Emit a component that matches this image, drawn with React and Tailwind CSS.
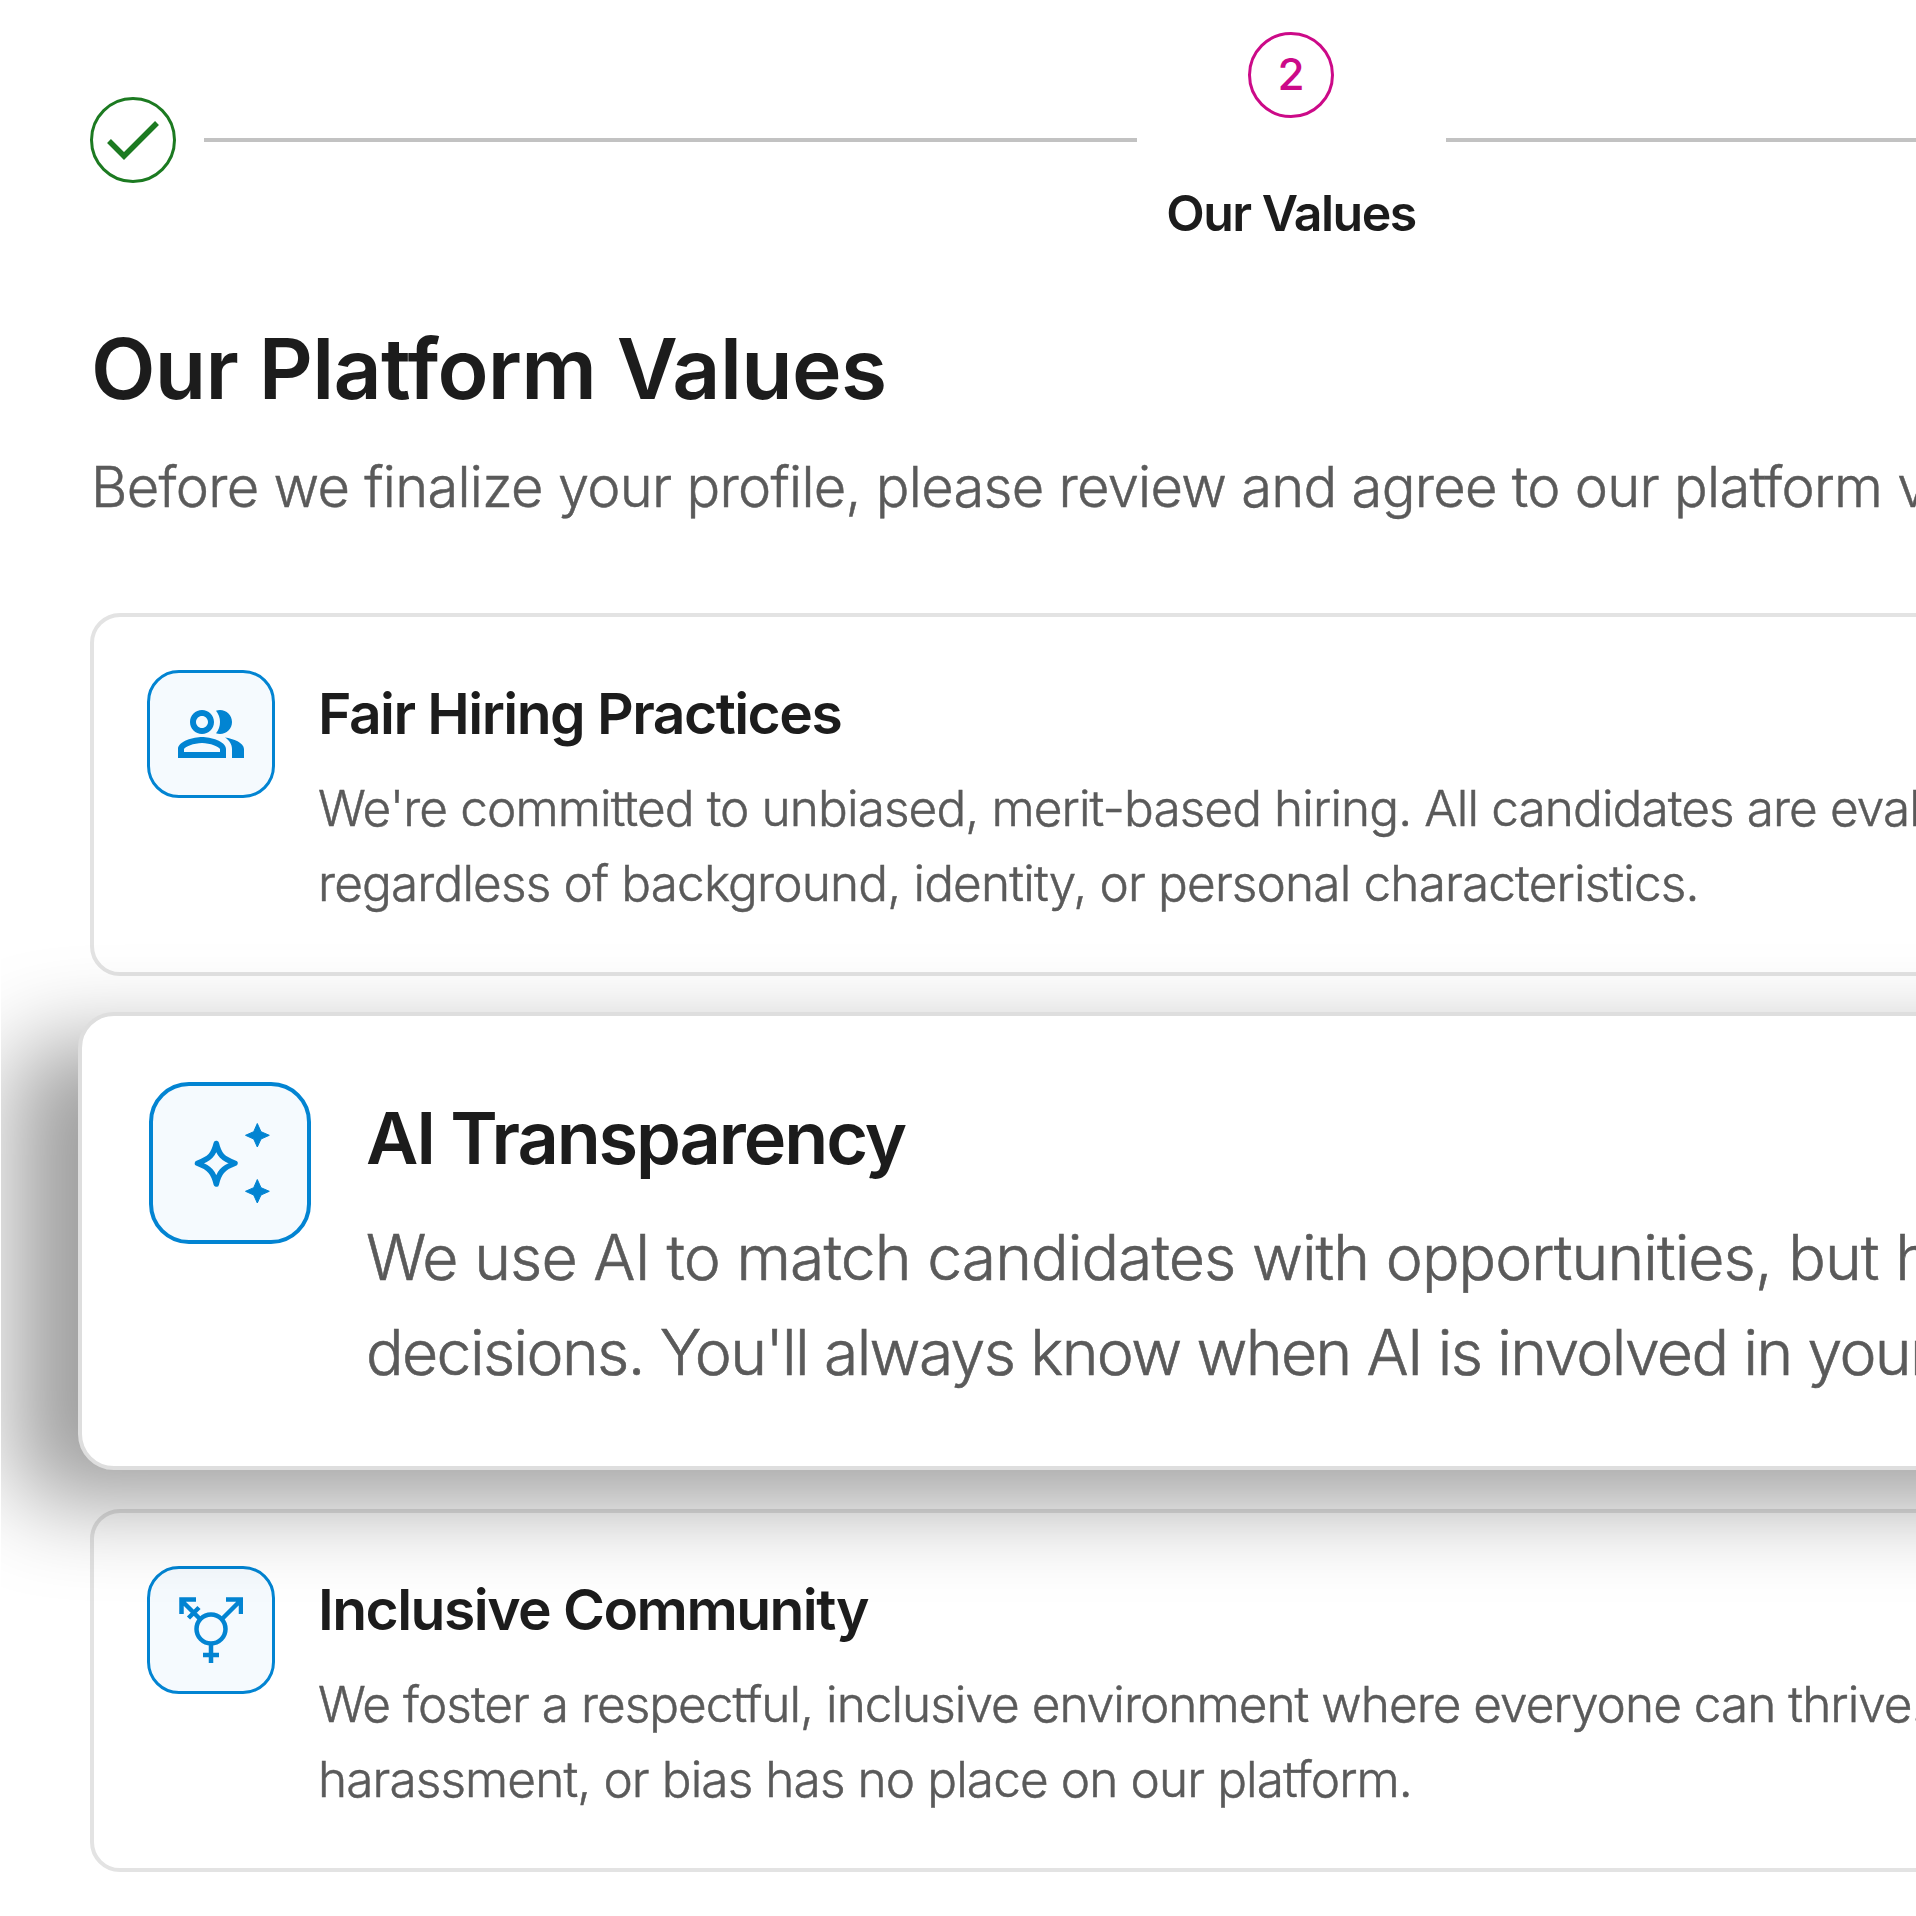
import { MdOutlinePeopleAlt } from 'react-icons/md'

function SparkleIcon() {
    return (
        <svg viewBox="0 0 84 80" className="w-[84px] h-20" fill="currentColor">
            <path d="M28.3 20.5C31 32 34.5 35.5 47 40.3C34.5 45 31 49.5 28.3 61C25.5 49.5 22 45 9.5 40.3C22 35.5 25.5 32 28.3 20.5Z" fill="none" stroke="currentColor" strokeWidth="5.5" strokeLinejoin="round" />
            <path d="M69.3 0.5L73 8.7L81.3 12.3L73 16L69.3 24L65.7 16L57.5 12.3L65.7 8.7Z" stroke="currentColor" strokeLinejoin="round" />
            <path d="M69.3 56.5L73 64.7L81.3 68.3L73 72L69.3 80L65.7 72L57.5 68.3L65.7 64.7Z" stroke="currentColor" strokeLinejoin="round" />
        </svg>
    )
}

function CommunityIcon() {
    return (
        <svg viewBox="0 0 64 66" className="w-16 h-[66px]" fill="none" stroke="currentColor" strokeWidth="4.5">
            <circle cx="32" cy="32" r="14.5" />
            <path d="M32 46.5V66M24 58H40" />
            <path d="M43 22L62 3M47 2.5H62V17" />
            <path d="M21 22L2 3M17 2.5H2.5V17M9.5 21L20 10.5" />
        </svg>
    )
}

const values = [
    {
        title: 'Fair Hiring Practices',
        icon: <MdOutlinePeopleAlt className="w-[72px] h-[72px]" />,
        lines: [
            { text: "We're committed to unbiased, merit-based hiring. All candidates are evaluated", tracking: 'tracking-[-0.018em]' },
            { text: 'regardless of background, identity, or personal characteristics.', tracking: 'tracking-[-0.017em]' },
        ],
    },
    {
        title: 'AI Transparency',
        icon: <SparkleIcon />,
        lines: [
            { text: 'We use AI to match candidates with opportunities, but humans', tracking: 'tracking-[-0.015em]' },
            { text: "decisions. You'll always know when AI is involved in your", tracking: 'tracking-[-0.026em]' },
        ],
        active: true,
    },
    {
        title: 'Inclusive Community',
        icon: <CommunityIcon />,
        lines: [
            { text: 'We foster a respectful, inclusive environment where everyone can thrive.', tracking: 'tracking-[-0.0195em]' },
            { text: 'harassment, or bias has no place on our platform.', tracking: 'tracking-[-0.018em]' },
        ],
    },
]

function ValueCard({ title, icon, lines }) {
    return (
        <div className="flex h-[363px] w-[2200px] gap-[43px] rounded-[30px] border-4 border-[#e3e3e3] bg-white pl-[53px] pt-[53px]">
            <div className="flex h-32 w-32 shrink-0 items-center justify-center rounded-[32px] border-3 border-[#0284d2] bg-[#f5fafe] text-[#0284d2]">
                {icon}
            </div>
            <div className="pt-[9px]">
                <h2 className="text-[57px] leading-[70px] font-semibold tracking-[-0.027em] text-[#1c1c1c]">{title}</h2>
                <div className="mt-[22px] text-[49.5px] leading-[75px] font-light text-[#5a5a5a] [-webkit-text-stroke:0.5px_#5a5a5a]">
                    {lines.map(({ text, tracking }) => <p key={text} className={tracking}>{text}</p>)}
                </div>
            </div>
        </div>
    )
}

function ActiveCard({ title, icon, lines }) {
    return (
        <div className="relative z-10 -mt-0.5 mb-px -ml-3 flex h-[458px] w-[2300px] gap-[55px] rounded-[36px] border-4 border-[#dedede] bg-white pl-[67px] pt-[66px] shadow-[-64px_32px_90px_rgba(0,0,0,0.38)]">
            <div className="flex h-[162px] w-[162px] shrink-0 items-center justify-center rounded-[40px] border-4 border-[#0284d2] bg-[#f5fafe] text-[#0284d2]">
                {icon}
            </div>
            <div className="pt-[12px]">
                <h2 className="text-[72px] leading-[88px] font-semibold tracking-[-0.029em] text-[#1c1c1c]">{title}</h2>
                <div className="mt-[28px] text-[62.5px] leading-[95px] font-light text-[#5a5a5a] [-webkit-text-stroke:0.6px_#5a5a5a]">
                    {lines.map(({ text, tracking }) => <p key={text} className={tracking}>{text}</p>)}
                </div>
            </div>
        </div>
    )
}

export default function App() {
    return (
        <div className="h-[1916px] w-[1916px] overflow-hidden bg-white pl-px font-['Inter',sans-serif]">
            <div className="h-full overflow-hidden whitespace-nowrap pl-[89px]">
                <div className="flex h-[280px] w-[2300px] items-center">
                    <div className="flex h-[86px] w-[86px] items-center justify-center rounded-full border-3 border-[#1c7a21] text-[#1c7a21]">
                        <svg viewBox="0 0 52 40" className="h-10 w-[52px]" fill="none" stroke="currentColor" strokeWidth="5.5">
                            <path d="M2 21L17 36L50 3" />
                        </svg>
                    </div>
                    <div className="ml-[28px] h-1 w-[933px] bg-[#c2c2c2]" />
                    <div className="mr-[31px] ml-[30px] flex w-[248px] flex-col items-center">
                        <div className="flex h-[86px] w-[86px] items-center justify-center rounded-full border-3 border-[#cc0a88] pb-0.5 text-[44px] font-medium text-[#cc0a88]">2</div>
                        <div className="mt-[62px] mb-[3px] text-[50px] leading-[66px] font-semibold tracking-[-0.03em] text-[#1c1c1c]">Our Values</div>
                    </div>
                    <div className="h-1 flex-1 bg-[#c2c2c2]" />
                </div>

                <h1 className="mt-[38px] pl-px text-[84px] leading-[102px] font-semibold tracking-[-0.7px] text-[#1c1c1c]">Our Platform Values</h1>
                <p className="mt-[25px] pl-px text-[56px] leading-[84px] font-light tracking-[-0.0125em] text-[#5a5a5a] [-webkit-text-stroke:0.5px_#5a5a5a]">Before we finalize your profile, please review and agree to our platform values</p>

                <div className="mt-[84px] flex flex-col gap-[38px]">
                    {values.map(({ active, ...value }) => active
                        ? <ActiveCard key={value.title} {...value} />
                        : <ValueCard key={value.title} {...value} />)}
                </div>
            </div>
        </div>
    )
}
